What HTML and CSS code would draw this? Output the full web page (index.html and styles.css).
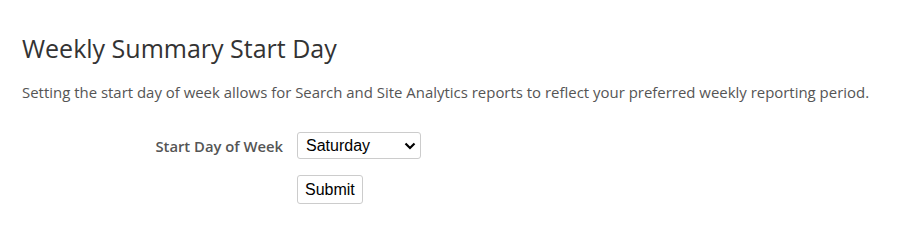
FILE: index.html
```html
<!DOCTYPE html>
<html lang="en">
<head>
    <meta charset="UTF-8">
    <meta name="viewport" content="width=device-width, initial-scale=1.0">
    <title>Weekly Summary Start Day</title>
    <link rel="stylesheet" href="styles.css">
</head>
<body>
    <div class="container">
        <h1>Weekly Summary Start Day</h1>
        <p class="intro">Setting the start day of week allows for Search and Site Analytics reports to reflect your preferred weekly reporting period.</p>
        <form class="settings-form">
            <div class="form-row">
                <label for="startDay">Start Day of Week</label>
                <select id="startDay">
                    <option>Sunday</option>
                    <option>Monday</option>
                    <option>Tuesday</option>
                    <option>Wednesday</option>
                    <option>Thursday</option>
                    <option>Friday</option>
                    <option selected>Saturday</option>
                </select>
            </div>
            <div class="form-row">
                <span></span>
                <button type="button">Submit</button>
            </div>
        </form>
    </div>
</body>
</html>
```

FILE: styles.css
```css
body {
    margin: 0;
    font-family: "Open Sans", sans-serif;
    background-color: #fff;
}
.container {
    padding: 30px 22px;
}
h1 {
    margin: 0 0 16px;
    font-size: 25px;
    font-weight: 400;
    color: #333;
    line-height: 36px;
}
.intro {
    margin: 0 0 30px;
    font-size: 14.95px;
    color: #555;
    line-height: 20px;
}
.form-row {
    display: grid;
    grid-template-columns: 261px auto;
    column-gap: 14px;
    align-items: center;
    justify-items: start;
    margin-bottom: 16px;
}
label {
    justify-self: end;
    font-size: 14.8px;
    font-weight: 600;
    color: #555;
}
select {
    appearance: none;
    width: 124px;
    height: 27px;
    padding: 0 4px 0 8px;
    font-family: "Liberation Sans", Arial, sans-serif;
    font-size: 16px;
    color: #000;
    border: 1px solid #ccc;
    border-radius: 3px;
    background: #fff url("data:image/svg+xml,%3Csvg xmlns='http://www.w3.org/2000/svg' width='12' height='8' viewBox='0 0 12 8'%3E%3Cpath d='M1.5 1.5 6 6 10.5 1.5' fill='none' stroke='%23000' stroke-width='2.2'/%3E%3C/svg%3E") no-repeat right 4px center;
}
button {
    height: 29px;
    padding: 0 7px;
    font-family: "Liberation Sans", Arial, sans-serif;
    font-size: 16px;
    color: #000;
    border: 1px solid #ccc;
    border-radius: 3px;
    background-color: #fff;
}
```
